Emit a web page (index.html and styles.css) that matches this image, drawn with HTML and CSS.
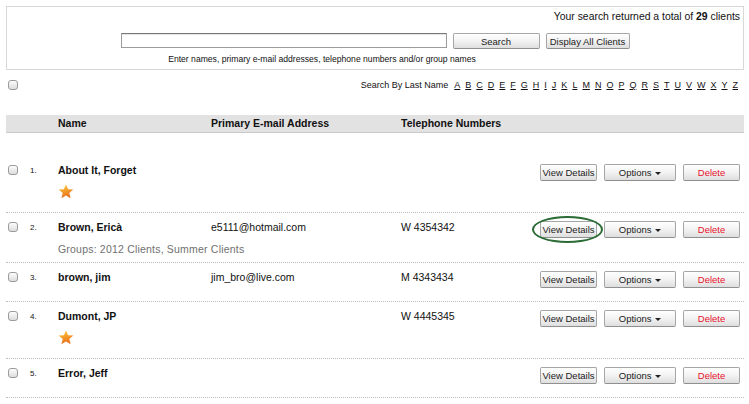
FILE: index.html
```html
<!DOCTYPE html>
<html lang="en">
<head>
    <meta charset="UTF-8">
    <title>Clients</title>
    <link rel="stylesheet" href="styles.css">
</head>
<body>
    <div class="page">
        <!-- Search box -->
        <div class="search-box">
            <p class="total">Your search returned a total of <b>29</b> clients</p>
            <form class="search-form">
                <div class="search-main">
                    <div class="search-inputs">
                        <input type="text" class="search-input">
                        <button type="button" class="btn btn-search">Search</button>
                    </div>
                    <p class="hint">Enter names, primary e-mail addresses, telephone numbers and/or group names</p>
                </div>
                <button type="button" class="btn btn-all">Display All Clients</button>
            </form>
        </div>

        <!-- Select all + letters -->
        <div class="filter-bar">
            <input type="checkbox" class="cb">
            <div class="letters">
                <span class="letters-label">Search By Last Name</span>
                <a href="#">A</a><a href="#">B</a><a href="#">C</a><a href="#">D</a><a href="#">E</a><a href="#">F</a><a href="#">G</a><a href="#">H</a><a href="#">I</a><a href="#">J</a><a href="#">K</a><a href="#">L</a><a href="#">M</a><a href="#">N</a><a href="#">O</a><a href="#">P</a><a href="#">Q</a><a href="#">R</a><a href="#">S</a><a href="#">T</a><a href="#">U</a><a href="#">V</a><a href="#">W</a><a href="#">X</a><a href="#">Y</a><a href="#">Z</a>
            </div>
        </div>

        <!-- Column heads -->
        <div class="list-head">
            <span></span><span></span>
            <span>Name</span>
            <span>Primary E-mail Address</span>
            <span>Telephone Numbers</span>
            <span></span>
        </div>

        <!-- Clients -->
        <div class="rows">
            <div class="row">
                <div class="cell-cb"><input type="checkbox" class="cb"></div>
                <div class="num">1.</div>
                <div class="name-cell">
                    <div class="name">About It, Forget</div>
                    <div class="star"><svg width="16" height="15" viewBox="0 0 16 15"><defs><linearGradient id="sg1" x1="0" y1="0" x2="0.3" y2="1"><stop offset="0" stop-color="#ffd23a"/><stop offset="1" stop-color="#e8701c"/></linearGradient></defs><path d="M8 0.5 L10.1 5.2 L15.3 5.6 L11.3 9 L12.6 14.2 L8 11.4 L3.4 14.2 L4.7 9 L0.7 5.6 L5.9 5.2 Z" fill="url(#sg1)"/></svg></div>
                </div>
                <div class="text"></div>
                <div class="text"></div>
                <div class="actions">
                    <button type="button" class="btn btn-view">View Details</button>
                    <button type="button" class="btn btn-options">Options <i class="caret"></i></button>
                    <button type="button" class="btn btn-delete">Delete</button>
                </div>
            </div>

            <div class="row">
                <div class="cell-cb"><input type="checkbox" class="cb"></div>
                <div class="num">2.</div>
                <div class="name-cell">
                    <div class="name">Brown, Ericà</div>
                    <div class="groups">Groups: 2012 Clients, Summer Clients</div>
                </div>
                <div class="text">e5111@hotmail.com</div>
                <div class="text">W 4354342</div>
                <div class="actions">
                    <span class="marked"><button type="button" class="btn btn-view">View Details</button></span>
                    <button type="button" class="btn btn-options">Options <i class="caret"></i></button>
                    <button type="button" class="btn btn-delete">Delete</button>
                </div>
            </div>

            <div class="row">
                <div class="cell-cb"><input type="checkbox" class="cb"></div>
                <div class="num">3.</div>
                <div class="name-cell">
                    <div class="name">brown, jim</div>
                </div>
                <div class="text">jim_bro@live.com</div>
                <div class="text">M 4343434</div>
                <div class="actions">
                    <button type="button" class="btn btn-view">View Details</button>
                    <button type="button" class="btn btn-options">Options <i class="caret"></i></button>
                    <button type="button" class="btn btn-delete">Delete</button>
                </div>
            </div>

            <div class="row">
                <div class="cell-cb"><input type="checkbox" class="cb"></div>
                <div class="num">4.</div>
                <div class="name-cell">
                    <div class="name">Dumont, JP</div>
                    <div class="star"><svg width="16" height="15" viewBox="0 0 16 15"><defs><linearGradient id="sg4" x1="0" y1="0" x2="0.3" y2="1"><stop offset="0" stop-color="#ffd23a"/><stop offset="1" stop-color="#e8701c"/></linearGradient></defs><path d="M8 0.5 L10.1 5.2 L15.3 5.6 L11.3 9 L12.6 14.2 L8 11.4 L3.4 14.2 L4.7 9 L0.7 5.6 L5.9 5.2 Z" fill="url(#sg4)"/></svg></div>
                </div>
                <div class="text"></div>
                <div class="text">W 4445345</div>
                <div class="actions">
                    <button type="button" class="btn btn-view">View Details</button>
                    <button type="button" class="btn btn-options">Options <i class="caret"></i></button>
                    <button type="button" class="btn btn-delete">Delete</button>
                </div>
            </div>

            <div class="row">
                <div class="cell-cb"><input type="checkbox" class="cb"></div>
                <div class="num">5.</div>
                <div class="name-cell">
                    <div class="name">Error, Jeff</div>
                </div>
                <div class="text"></div>
                <div class="text"></div>
                <div class="actions">
                    <button type="button" class="btn btn-view">View Details</button>
                    <button type="button" class="btn btn-options">Options <i class="caret"></i></button>
                    <button type="button" class="btn btn-delete">Delete</button>
                </div>
            </div>
        </div>
    </div>
</body>
</html>
```

FILE: styles.css
```css
body {
    margin: 0;
    background: #fff;
    color: #111;
    font-family: "Liberation Sans", Arial, sans-serif;
    font-size: 10.5px;
}

.page {
    padding: 6px 5px 0 6px;
}

/* search box */
.search-box {
    border: 1px solid #d8d8d8;
    height: 59px;
    padding: 3px 3px 0 0;
}

.total {
    margin: 0;
    text-align: right;
    font-size: 10.4px;
    line-height: 14px;
}

.search-form {
    display: flex;
    justify-content: center;
    align-items: flex-start;
    gap: 6px;
    margin: 9px 0 0 0;
    padding-left: 3px;
}

.search-inputs {
    display: flex;
    gap: 6px;
}

.search-input {
    width: 326px;
    height: 15px;
    box-sizing: border-box;
    margin: 0;
    border: 1px solid #9c9c9c;
    border-top-color: #777;
    box-shadow: inset 0 1px 1px #e4e4e4;
    padding: 0 3px;
}

.hint {
    margin: 4px 0 0 0;
    padding-right: 16px;
    text-align: center;
    font-size: 8.6px;
    line-height: 12px;
}

.btn {
    height: 17px;
    box-sizing: border-box;
    margin: 0;
    padding: 0;
    border: 1px solid #a6a6a6;
    border-bottom-color: #8f8f8f;
    border-radius: 2px;
    background: linear-gradient(#ffffff, #f2f2f2 50%, #dedede);
    color: #222;
    font-family: "Liberation Sans", Arial, sans-serif;
    font-size: 9.5px;
    line-height: 15px;
    text-align: center;
}

.btn-search {
    width: 87px;
    height: 16px;
}

.btn-all {
    width: 84px;
    height: 16px;
}

/* checkbox */
.cb {
    appearance: none;
    -webkit-appearance: none;
    width: 10px;
    height: 10px;
    margin: 0;
    border: 1px solid #9b9b9b;
    border-radius: 3px;
    background: linear-gradient(#fdfdfd, #dcdcdc);
    display: block;
}

/* letters */
.filter-bar {
    display: flex;
    justify-content: space-between;
    align-items: center;
    margin-top: 8px;
    padding: 0 6px 0 2px;
    height: 14px;
}

.letters {
    display: flex;
    align-items: center;
    font-size: 9px;
}

.letters-label {
    margin-right: 1px;
}

.letters a {
    color: #111;
    margin-left: 5px;
}

/* list */
.list-head,
.row {
    display: grid;
    grid-template-columns: 24px 28px 153px 190px 139px 1fr;
}

.list-head {
    margin-top: 23px;
    height: 17px;
    line-height: 17px;
    background: #e2e2e2;
    border-bottom: 1px solid #cacaca;
    font-size: 10.5px;
    font-weight: bold;
}

.rows {
    margin-top: 23px;
}

.row {
    padding-top: 8px;
    border-bottom: 1px dotted #bdbdbd;
    align-items: start;
}

.cell-cb {
    padding: 1px 0 0 2px;
}

.num {
    font-size: 8px;
    line-height: 13px;
}

.name {
    font-weight: bold;
    font-size: 10.5px;
    line-height: 13px;
}

.text {
    line-height: 13px;
}

.groups {
    margin-top: 9px;
    padding-bottom: 7px;
    color: #707070;
    line-height: 12px;
    letter-spacing: 0.2px;
    white-space: nowrap;
}

.star {
    margin: 7px 0 13px 0;
    height: 15px;
}

.star svg {
    display: block;
}

.actions {
    display: flex;
    justify-content: flex-end;
    gap: 7px;
    padding: 0 4px 13px 0;
}

.btn-view {
    width: 57px;
}

.btn-options {
    width: 72px;
}

.btn-delete {
    width: 57px;
    color: #e8102c;
}

.caret {
    display: inline-block;
    width: 0;
    height: 0;
    border-left: 3px solid transparent;
    border-right: 3px solid transparent;
    border-top: 3px solid #222;
    vertical-align: 1px;
    margin-left: 1px;
}

/* hand-drawn ring on the second row */
.marked {
    position: relative;
    display: block;
}

.marked::after {
    content: "";
    position: absolute;
    left: -8px;
    top: -5px;
    width: 67px;
    height: 23px;
    border: 2.5px solid #2b6b35;
    border-radius: 50%;
}
```
